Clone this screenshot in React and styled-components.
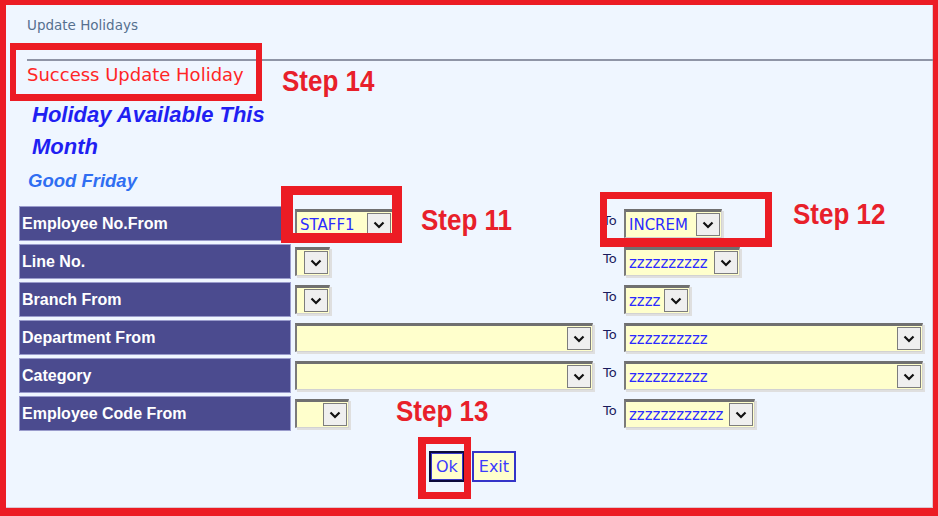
import React from "react";
import styled, { createGlobalStyle } from "styled-components";

const Global = createGlobalStyle`
  html, body { margin: 0; padding: 0; background: #ffffff; }
  #root { width: 938px; height: 516px; }
`;

const Page = styled.div`
  position: relative;
  box-sizing: border-box;
  width: 938px;
  height: 516px;
  background: #eff6ff;
  border-style: solid;
  border-color: #ec1c24;
  border-width: 5px 5px 8px 6px;
  box-shadow: inset -1px -1px 0 #dcc8d2;
  overflow: hidden;
`;

const Title = styled.div`
  padding: 12px 0 0 21px;
  font: 13.5px/16px "DejaVu Sans", sans-serif;
  color: #56708f;
`;

const Rule = styled.div`
  margin: 26px 0 0 21px;
  height: 2px;
  background: #8f95a6;
`;

const Message = styled.div`
  margin-top: 3px;
  padding-left: 21px;
  font: 18px/22px "DejaVu Sans", sans-serif;
  color: #ff2626;
`;

const Heading = styled.div`
  margin-top: 13px;
  padding-left: 26px;
  width: 250px;
  font: italic bold 22px/32px "Liberation Sans", Arial, sans-serif;
  color: #1f1ff2;
`;

const SubHeading = styled.div`
  margin-top: 6px;
  padding-left: 22px;
  font: italic bold 18.5px/24px "Liberation Sans", Arial, sans-serif;
  color: #2f6ef2;
`;

const FormGrid = styled.div`
  margin-top: 13px;
  padding-left: 13px;
  display: grid;
  grid-template-columns: 272px 309px 24px 1fr;
  grid-auto-rows: 35px;
  row-gap: 3px;
`;

const LabelCell = styled.div`
  box-sizing: border-box;
  display: flex;
  align-items: center;
  padding-left: 2px;
  background: #4b4b8f;
  border: 1px solid #9a9ccc;
  font: bold 16px/18px "Liberation Sans", Arial, sans-serif;
  color: #ffffff;
`;

const FieldCell = styled.div`
  display: flex;
  align-items: center;
  padding-left: 4px;
`;

const ToCell = styled.div`
  padding: 7px 0 0 3px;
  font: 13px/15px "DejaVu Sans", sans-serif;
  color: #1b1b5c;
`;

const SelectBox = styled.div`
  box-sizing: border-box;
  display: flex;
  align-items: center;
  width: ${(p) => p.$w}px;
  height: 29px;
  border-style: solid;
  border-width: 3px 1px 1px 2px;
  border-color: #707070 #d2d2d2 #d2d2d2 #7a7a7a;
  background: #ffffcc;
  box-shadow: 2px 2px 0 #dfdfdf;
  padding-right: 1px;
`;

const SelectValue = styled.span`
  flex: 1;
  min-width: 0;
  overflow: hidden;
  white-space: nowrap;
  padding-left: 3px;
  font: 15px/20px "DejaVu Sans", sans-serif;
  color: #2b2bff;
`;

const DropButton = styled.span`
  box-sizing: border-box;
  flex: none;
  width: 24px;
  height: 23px;
  display: flex;
  align-items: center;
  justify-content: center;
  background: #efefef;
  border: 1px solid #7d7d7d;
`;

const Buttons = styled.div`
  margin-top: 20px;
  padding-left: 6px;
  display: flex;
  justify-content: center;
  gap: 7px;
`;

const FormButton = styled.button`
  box-sizing: border-box;
  height: 31px;
  padding: 0 5px;
  background: #ffffcc;
  border: ${(p) => (p.$focused ? "2px solid #0b0b3b" : "2px solid #3434c8")};
  box-shadow: ${(p) => (p.$focused ? "inset 0 0 0 1px #3a3acc" : "none")};
  font: 16px/20px "DejaVu Sans", sans-serif;
  color: #3b3bff;
  cursor: pointer;
`;

const StepBox = styled.div`
  position: absolute;
  box-sizing: border-box;
  left: ${(p) => p.$x - 6}px;
  top: ${(p) => p.$y - 5}px;
  width: ${(p) => p.$w}px;
  height: ${(p) => p.$h}px;
  border: solid #ec1c24;
  border-width: ${(p) => p.$bw};
  z-index: 2;
`;

const StepLabel = styled.div`
  position: absolute;
  left: ${(p) => p.$x - 6}px;
  top: ${(p) => p.$cy - 5 - 15}px;
  font: bold 26px/30px "Liberation Sans", Arial, sans-serif;
  color: #e8202a;
  white-space: nowrap;
  transform: scaleY(1.12);
  transform-origin: left center;
  z-index: 2;
`;

const Chevron = () => (
  <svg width="12" height="8" viewBox="0 0 12 8">
    <path d="M1.5 1.5 L6 6 L10.5 1.5" fill="none" stroke="#111" strokeWidth="2.2" />
  </svg>
);

const Select = ({ width, value }) => (
  <SelectBox $w={width}>
    <SelectValue>{value}</SelectValue>
    <DropButton>
      <Chevron />
    </DropButton>
  </SelectBox>
);

const rows = [
  { label: "Employee No.From", from: [98, "STAFF1"], to: [98, "INCREM"] },
  { label: "Line No.", from: [35, ""], to: [116, "zzzzzzzzzz"] },
  { label: "Branch From", from: [35, ""], to: [66, "zzzz"] },
  { label: "Department From", from: [298, ""], to: [299, "zzzzzzzzzz"] },
  { label: "Category", from: [298, ""], to: [299, "zzzzzzzzzz"] },
  { label: "Employee Code From", from: [54, ""], to: [131, "zzzzzzzzzzzz"] },
];

export default function App() {
  return (
    <>
      <Global />
      <Page>
        <Title>Update Holidays</Title>
        <Rule />
        <Message>Success Update Holiday</Message>
        <Heading>Holiday Available This Month</Heading>
        <SubHeading>Good Friday</SubHeading>
        <FormGrid>
          {rows.map((r) => (
            <React.Fragment key={r.label}>
              <LabelCell>{r.label}</LabelCell>
              <FieldCell>
                <Select width={r.from[0]} value={r.from[1]} />
              </FieldCell>
              <ToCell>To</ToCell>
              <FieldCell style={{ paddingLeft: 0 }}>
                <Select width={r.to[0]} value={r.to[1]} />
              </FieldCell>
            </React.Fragment>
          ))}
        </FormGrid>
        <Buttons>
          <FormButton $focused>Ok</FormButton>
          <FormButton>Exit</FormButton>
        </Buttons>

        <StepBox $x={10} $y={43} $w={252} $h={58} $bw="7px 6px 7px 6px" />
        <StepLabel $x={282} $cy={81}>Step 14</StepLabel>
        <StepBox $x={281} $y={186} $w={121} $h={57} $bw="9px 10px 10px 12px" />
        <StepLabel $x={421} $cy={220}>Step 11</StepLabel>
        <StepBox $x={600} $y={192} $w={172} $h={55} $bw="7px 7px 9px 7px" />
        <StepLabel $x={793} $cy={214}>Step 12</StepLabel>
        <StepBox $x={418} $y={437} $w={53} $h={62} $bw="7px 7px 7px 8px" />
        <StepLabel $x={396} $cy={411}>Step 13</StepLabel>
      </Page>
    </>
  );
}
